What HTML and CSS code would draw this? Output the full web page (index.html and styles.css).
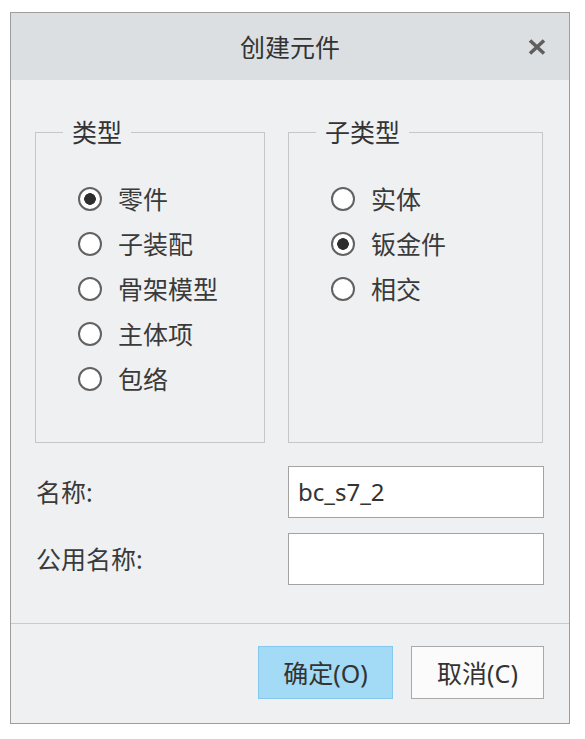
FILE: index.html
```html
<!DOCTYPE html>
<html lang="zh-CN">
<head>
<meta charset="utf-8">
<title>创建元件</title>
<link rel="stylesheet" href="styles.css">
</head>
<body>
<div class="dialog">
  <div class="titlebar">
    <span></span>
    <span class="title">创建元件</span>
    <span class="close">
      <svg width="18" height="16" viewBox="0 0 18 16"><path d="M2 1.5 L16 14.5 M16 1.5 L2 14.5" stroke="#5f5f5f" stroke-width="3.6" stroke-linecap="butt"/></svg>
    </span>
  </div>
  <div class="content">
    <div class="groups">
      <fieldset class="group">
        <legend>类型</legend>
        <div class="options">
          <div class="radio checked"><span class="dot"></span><span>零件</span></div>
          <div class="radio"><span class="dot"></span><span>子装配</span></div>
          <div class="radio"><span class="dot"></span><span>骨架模型</span></div>
          <div class="radio"><span class="dot"></span><span>主体项</span></div>
          <div class="radio"><span class="dot"></span><span>包络</span></div>
        </div>
      </fieldset>
      <fieldset class="group">
        <legend>子类型</legend>
        <div class="options">
          <div class="radio"><span class="dot"></span><span>实体</span></div>
          <div class="radio checked"><span class="dot"></span><span>钣金件</span></div>
          <div class="radio"><span class="dot"></span><span>相交</span></div>
        </div>
      </fieldset>
    </div>
    <div class="fields">
      <div class="field">
        <span class="label">名称:</span>
        <div class="input">bc_s7_2</div>
      </div>
      <div class="field">
        <span class="label">公用名称:</span>
        <div class="input"></div>
      </div>
    </div>
  </div>
  <div class="footer">
    <button class="btn primary">确定(O)</button>
    <button class="btn">取消(C)</button>
  </div>
</div>
</body>
</html>
```

FILE: styles.css
```css
html, body {
  margin: 0;
  padding: 0;
  background: #ffffff;
}

body {
  font-family: "Noto Sans", "Noto Sans CJK SC", sans-serif;
  color: #3a3a3a;
  font-size: 25px;
}

.dialog {
  margin: 12px 0 0 10px;
  width: 560px;
  height: 712px;
  box-sizing: border-box;
  border: 1px solid #9d9d9d;
  background: #eff0f2;
  display: flex;
  flex-direction: column;
}

.titlebar {
  height: 67px;
  flex: none;
  background: #dcdfe1;
  display: grid;
  grid-template-columns: 1fr auto 1fr;
  align-items: center;
  padding: 0 23px 0 23px;
}

.title {
  font-size: 25px;
  line-height: 30px;
  color: #333;
}

.close {
  justify-self: end;
  display: flex;
  width: 18px;
  height: 16px;
}

.content {
  padding: 38px 25px 0 24px;
}

.groups {
  display: grid;
  grid-template-columns: 230px 255px;
  column-gap: 23px;
}

.group {
  margin: 0;
  padding: 0;
  min-width: 0;
  height: 325px;
  box-sizing: border-box;
  border: 1px solid #c5c6c8;
}

.group legend {
  margin-left: 27px;
  padding: 0 9px;
  font-size: 25px;
  line-height: 28px;
  color: #333;
}

.options {
  margin-top: 30px;
  padding-left: 42px;
}

.radio {
  display: flex;
  align-items: center;
  gap: 16px;
  height: 45px;
  line-height: 30px;
}

.dot {
  width: 24px;
  height: 24px;
  box-sizing: border-box;
  border: 2px solid #626262;
  border-radius: 50%;
  background: #fff;
  flex: none;
}

.checked .dot {
  background: radial-gradient(circle, #2e2e2e 0 5.5px, #ffffff 6.1px);
}

.fields {
  margin-top: 23px;
  display: flex;
  flex-direction: column;
  gap: 15px;
}

.field {
  display: flex;
  align-items: center;
}

.label {
  flex: 1;
  padding-left: 1px;
  line-height: 30px;
}

.input {
  width: 256px;
  height: 52px;
  box-sizing: border-box;
  border: 1px solid #a3a3a3;
  background: #fff;
  padding-left: 9px;
  display: flex;
  align-items: center;
  line-height: 30px;
  font-size: 24px;
  color: #333;
}

.footer {
  margin-top: auto;
  height: 100px;
  box-sizing: border-box;
  border-top: 1px solid #c9cacc;
  display: flex;
  justify-content: flex-end;
  align-items: flex-start;
  gap: 18px;
  padding: 22px 25px 0 0;
}

.btn {
  font-family: inherit;
  font-size: 25px;
  line-height: 30px;
  color: #333;
  height: 53px;
  width: 133px;
  padding: 0;
  box-sizing: border-box;
  border: 1px solid #a9a9a9;
  background: #fbfbfb;
}

.btn.primary {
  width: 135px;
  background: #a3daf6;
  border-color: #86c7ec;
}
```
